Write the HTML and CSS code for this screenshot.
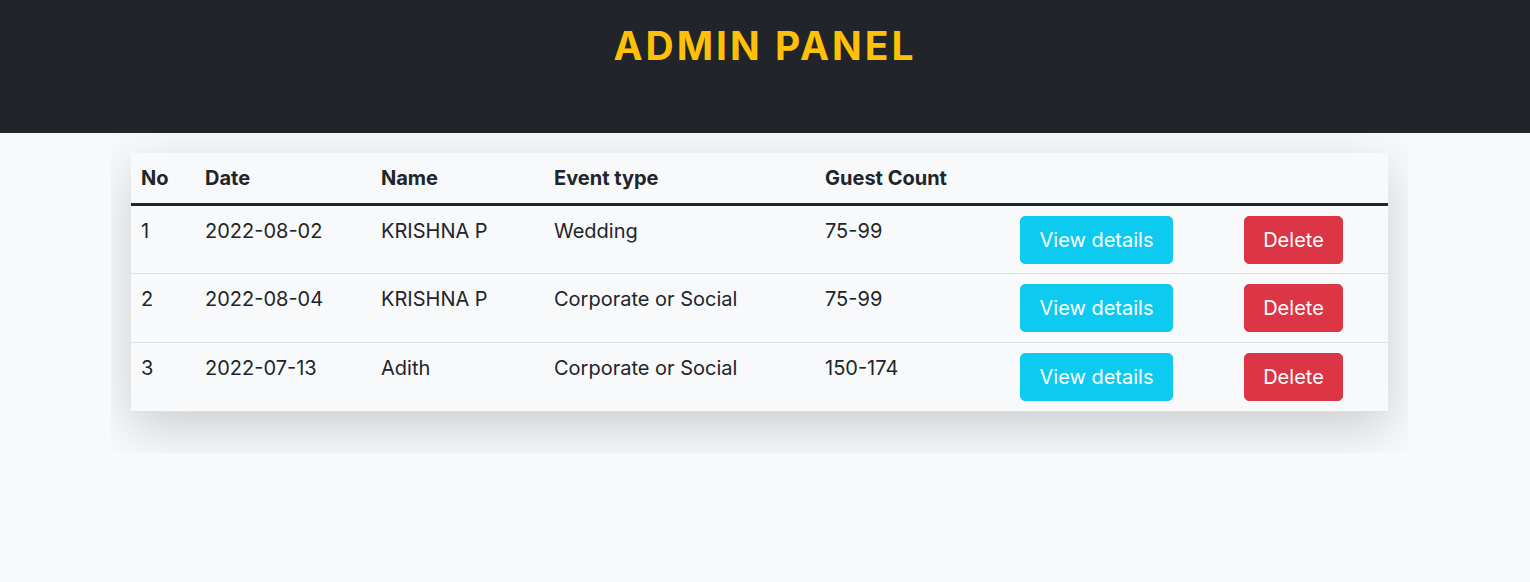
FILE: index.html
```html
<!DOCTYPE html>
<html>
<head>
<meta charset="utf-8">
<title>Admin Panel</title>
<link rel="stylesheet" href="styles.css">
</head>
<body>
<header class="topbar">
  <h1 class="title">ADMIN PANEL</h1>
</header>
<main class="page">
  <div class="table-wrap">
    <table class="bookings">
      <colgroup>
        <col class="c-no"><col class="c-date"><col class="c-name"><col class="c-event"><col class="c-guest"><col class="c-view"><col class="c-del">
      </colgroup>
      <thead>
        <tr><th>No</th><th>Date</th><th>Name</th><th>Event type</th><th>Guest Count</th><th></th><th></th></tr>
      </thead>
      <tbody>
        <tr><td>1</td><td>2022-08-02</td><td>KRISHNA P</td><td>Wedding</td><td>75-99</td><td><button class="btn btn-info">View details</button></td><td><button class="btn btn-danger">Delete</button></td></tr>
        <tr><td>2</td><td>2022-08-04</td><td>KRISHNA P</td><td>Corporate or Social</td><td>75-99</td><td><button class="btn btn-info">View details</button></td><td><button class="btn btn-danger">Delete</button></td></tr>
        <tr><td>3</td><td>2022-07-13</td><td>Adith</td><td>Corporate or Social</td><td>150-174</td><td><button class="btn btn-info">View details</button></td><td><button class="btn btn-danger">Delete</button></td></tr>
      </tbody>
    </table>
  </div>
</main>
</body>
</html>
```
FILE: styles.css
```css
* { box-sizing: border-box; }
html, body { margin: 0; padding: 0; }
body {
  background: #f8f9fa;
  font-family: Inter, "Noto Sans", "DejaVu Sans", sans-serif;
  color: #212529;
  font-size: 20px;
  line-height: 1.5;
  height: 582px;
  overflow: hidden;
}
.topbar {
  background: #212529;
  height: 133px;
  display: flex;
  justify-content: center;
  padding-top: 22px;
}
.title {
  margin: 0;
  color: #ffc107;
  font-size: 39px;
  font-weight: 700;
  line-height: 48px;
  letter-spacing: 3px;
}
.page {
  padding: 0 122px 0 111px;
}
.table-wrap {
  overflow: hidden;
  padding: 20px 20px 20px;
}
.bookings {
  width: 100%;
  border-collapse: collapse;
  table-layout: fixed;
  background: #f8f9fa;
  box-shadow: 0 16px 48px rgba(0,0,0,0.175);
  margin-bottom: 21px;
}
.c-no { width: 64px; }
.c-date { width: 176px; }
.c-name { width: 173px; }
.c-event { width: 271px; }
.c-guest { width: 195px; }
.c-view { width: 224px; }
.c-del { width: 154px; }
.bookings th, .bookings td {
  padding: 10px;
  text-align: left;
  vertical-align: top;
  white-space: nowrap;
}
.bookings th {
  font-weight: 700;
  border-bottom: 3px solid #212529;
}
.bookings td {
  font-weight: 400;
  border-bottom: 1px solid #dee2e6;
}
.bookings tbody tr:first-child td { padding-top: 10px; padding-bottom: 9px; }
.btn {
  font-family: inherit;
  font-size: 20px;
  line-height: 30px;
  padding: 8px 16px;
  border: 1px solid transparent;
  border-radius: 5px;
  color: #fff;
  cursor: pointer;
  display: inline-block;
}
.btn-info { background: #0dcaf0; border-color: #0dcaf0; width: 153px; }
.btn-danger { background: #dc3545; border-color: #dc3545; width: 99px; }
```
